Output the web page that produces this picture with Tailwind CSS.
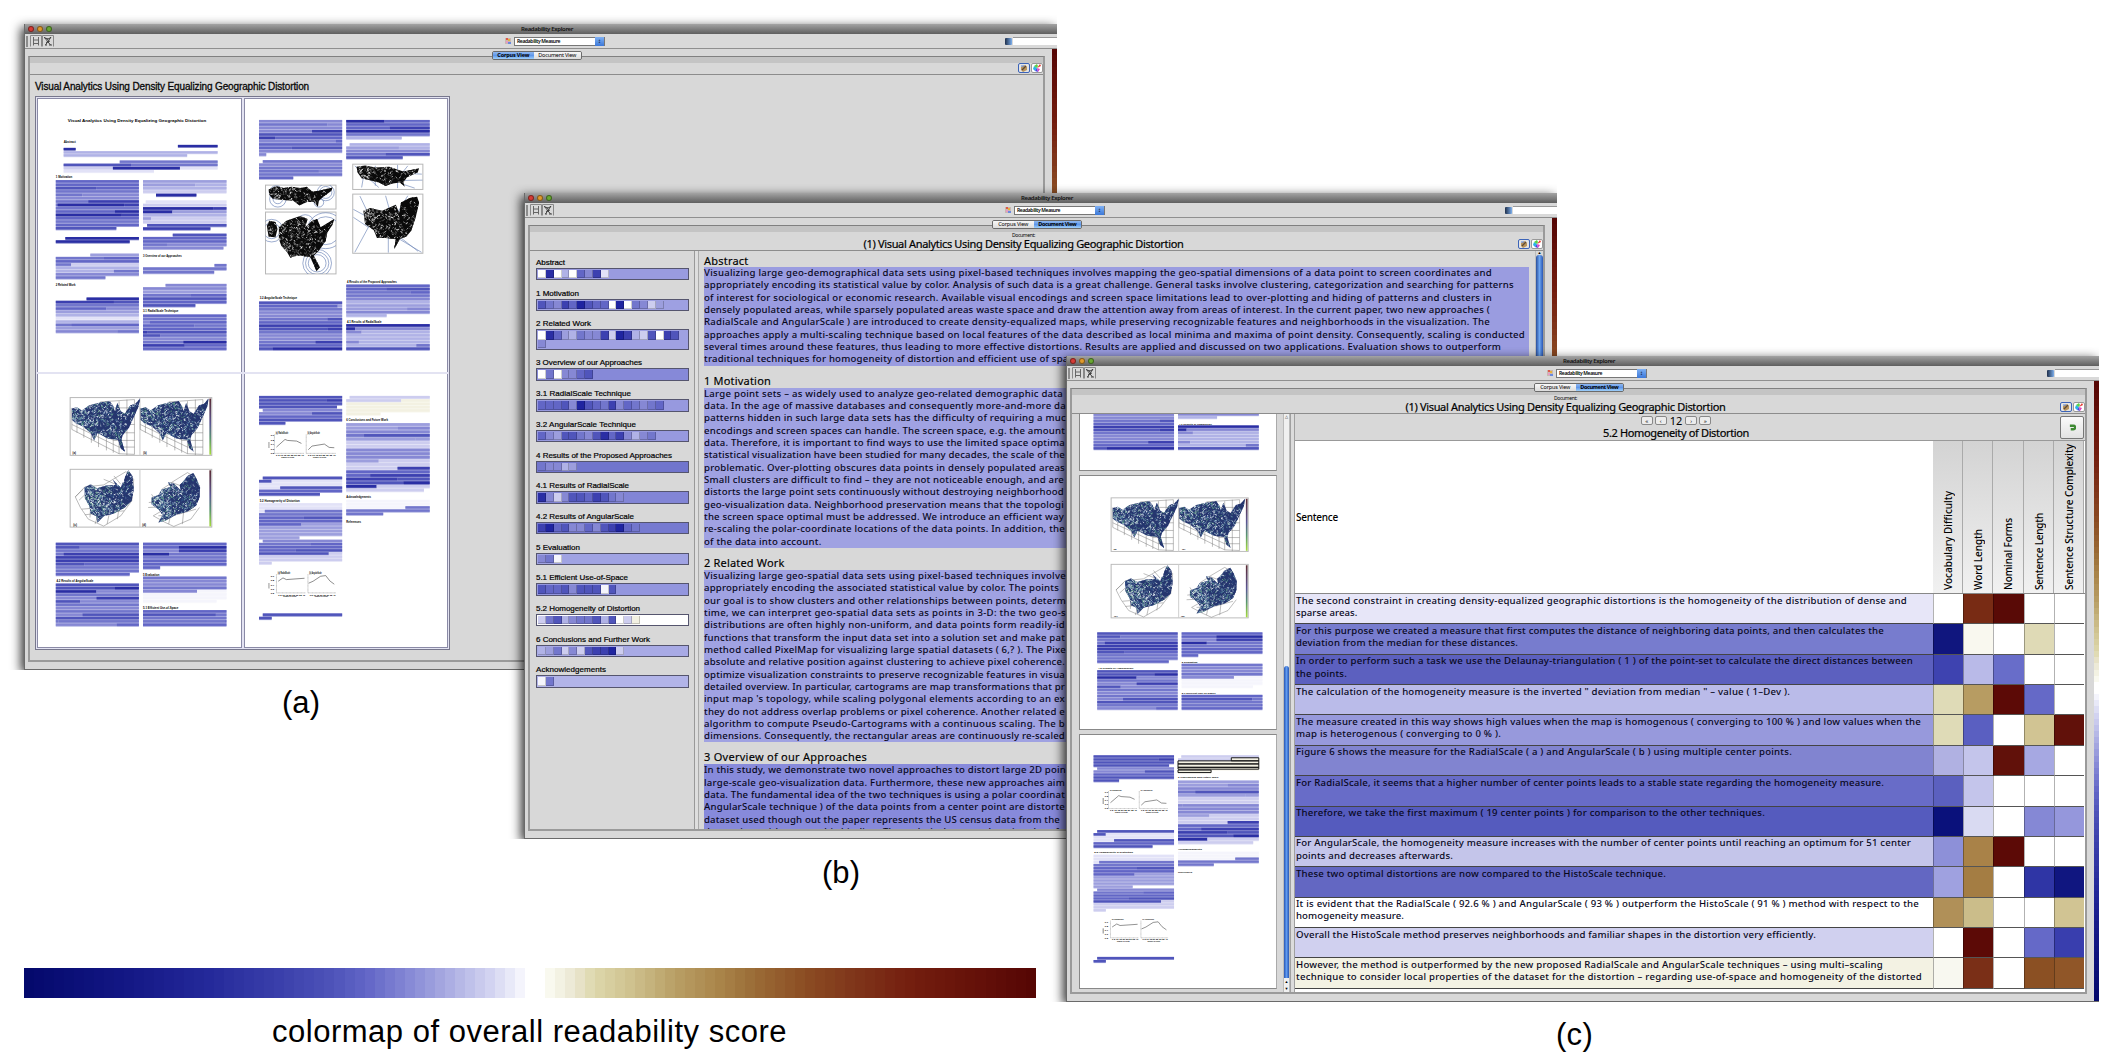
<!DOCTYPE html>
<html lang="en">
<head>
<meta charset="utf-8">
<title>Readability Explorer</title>
<script src="https://cdn.jsdelivr.net/npm/@tailwindcss/browser@4"></script>
</head>
<body class="bg-white">
<div class="relative w-[2110px] h-[1054px] overflow-hidden bg-white text-black" id="stage"></div>

<script>
const LG = "font-['Noto_Sans',sans-serif]";

/* ---------- readability colour map ---------- */
const stops = [[0,'04096c'],[.096,'131784'],[.176,'232899'],[.243,'383da9'],[.297,'4b50b7'],[.337,'6266c7'],[.384,'8a8dd7'],[.424,'b0b2e4'],[.464,'d6d7f2'],[.491,'f5f5fc'],[.496,'ffffff'],[.515,'ffffff'],[.519,'fafaf0'],[.544,'ebe7d2'],[.564,'ddd8ac'],[.604,'cdbf8c'],[.644,'b9a066'],[.685,'ab874c'],[.725,'9a6b36'],[.778,'8b4b22'],[.825,'7f351a'],[.878,'741f0f'],[.945,'651109'],[1,'560604']];
const rgb = h => [0,2,4].map(i => parseInt(h.slice(i,i+2),16));
function cmap(t){
  for(let i=1;i<stops.length;i++) if(t<=stops[i][0]){
    const [a,ca]=stops[i-1],[b,cb]=stops[i],k=(t-a)/(b-a),x=rgb(ca),y=rgb(cb);
    return 'rgb('+x.map((v,j)=>Math.round(v+(y[j]-v)*k)).join(',')+')';
  }
  return '#560604';
}
const scale = rev => Array.from({length:101},(_,i)=>`<div class="flex-1" style="background:${cmap(rev?1-i/100:i/100)}"></div>`).join('');

const pal = {d:'#1f24a0','0':'#2a2ea4','1':'#3c40b0','2':'#5055bb','3':'#6266c6','4':'#7276cc','5':'#8688d4','6':'#9c9edd','7':'#b0b2e6','8':'#cdcdef','9':'#e2e2f7',w:'#ffffff',f:'#f5f5fc',b:'#f3f1e2'};

/* ---------- page miniatures ---------- */
let seed = 7; const rnd = () => (seed = (seed*16807)%2147483647)/2147483647;
function block(x0,x1,y0,y1,rows){
  const r = rows.split('|'), p = (y1-y0)/r.length; let s='';
  r.forEach((row,i)=>{
    const t = row.trim().split(/\s+/);
    if(isNaN(+t[0]) || t[0].length<2) t.unshift(x0);
    if(t.length%2===0) t.push(x1);
    for(let k=0;k+2<t.length;k+=2){
      const w=t[k+2]-t[k], y=y0+i*p;
      s+=`<rect x="${t[k]}" y="${y.toFixed(1)}" width="${w}" height="${p.toFixed(1)}" fill="${pal[t[k+1]]}" opacity=".6"/><rect x="${t[k]}" y="${y.toFixed(1)}" width="${w}" height="${(p*.74).toFixed(1)}" fill="${pal[t[k+1]]}"/>`;
    }
  });
  return s;
}
const tt = (x,y,w,s,txt) => `<text x="${x}" y="${y}" font-size="${s}" textLength="${w}" lengthAdjust="spacingAndGlyphs" font-weight="700" font-family="Liberation Sans, sans-serif">${txt}</text>`;
let cid=0;
function cloud(pts,box,colors,n,len){
  const id='c'+(cid++), [a,b,c,d]=box; let s=`<clipPath id="${id}"><polygon points="${pts}"/></clipPath><polygon points="${pts}" fill="${colors[0]}"/><g clip-path="url(#${id})" fill="none">`;
  for(let i=0;i<n;i++){
    const x=a+(c-a)*rnd(), y=b+(d-b)*rnd(), f=(x-a)/(c-a), ci = rnd()<(1.1-f*.85)? 1+Math.floor(rnd()*(colors.length-1)) : 0;
    s+=`<path d="M${x.toFixed(0)} ${y.toFixed(0)}l${((rnd()-.5)*len).toFixed(1)} ${((rnd()-.5)*len).toFixed(1)}" stroke="${colors[ci]}" stroke-width="2.6"/>`;
  }
  return s+'</g>';
}
const frame=(x,y,X,Y,c='#b8b8b8')=>`<rect x="${x}" y="${y}" width="${X-x}" height="${Y-y}" fill="#fff" stroke="${c}" stroke-width="3"/>`;
const boxed=(x,y,X,Y,art)=>{const id='f'+(cid++);return frame(x,y,X,Y)+`<clipPath id="${id}"><rect x="${x}" y="${y}" width="${X-x}" height="${Y-y}"/></clipPath><g clip-path="url(#${id})">${art}</g>`};
const rings=(x,y,...r)=>r.map(q=>`<circle cx="${x}" cy="${y}" r="${q}" fill="none" stroke="#6d84b8" stroke-width="2"/>`).join('');
const ray=d=>`<path d="${d}" stroke="#7189b9" stroke-width="2" fill="none"/>`;
const bw=['#0a0a0a','#777','#f0f0f0','#444','#111','#c8c8c8'];
const bl=['#26366f','#5a8a9e','#bcd6d6','#31558a','#eaf2f3','#5f9f84','#7f9fc0','#dfe9ee'];

const P1 = tt(195,363,405,11,'Visual Analytics Using Density Equalizing Geographic Distortion')+tt(183,426,35,8,'Abstract')+
 block(183,633,432,441,'517 0 633')+block(183,633,441,450,'0 218')+block(183,633,451,469,'7|7 544')+
 block(183,633,479,517,'347 4 633|2 380 4|8 327 0 523 9|9 447')+tt(160,532,48,8,'1 Motivation')+
 block(160,403,538,689,'3|3|2 278 3|4|4 238 5|5|4 255 1|4 165 0 360 1|4|3 333 0|0 353 1|3|4|3|2 337')+
 block(160,403,709,729,'188 0 403|0 376')+
 block(160,403,759,837,'261 6 403|4 299 3|3|4 205 8|7|7 330 4|5|4 305')+tt(160,856,58,8,'2 Related Work')+
 block(160,403,891,999,'250 0 403|1 330 2|4|3 308 5|6|7|9|7|4 205 3|6|5 340 4')+
 block(415,659,538,589,'6|6 568 7|7|8|453 0 571')+
 block(415,659,599,690,'423 9 659|8|0 620 1|0 501 6|7|6 439 8|8|427 2 659|1 612')+
 block(415,659,699,748,'502 2 659|3|3|4 485 5|5 650')+tt(415,768,113,8,'3 Overview of our Approaches')+
 block(415,659,790,821,'624 4 659|4|4 623')+block(415,659,850,921,'481 5 659|5|6|4 555 3|2|3|2 568')+
 tt(415,936,103,8,'3.1 RadialScale Technique')+
 block(415,659,942,1051,'3|4|5 435 3|3 565 4|3|1 427 2|2 465 4|5|4 533 0|1 537 3|3');

const P2 = block(750,993,357,467,'5|4 950 5|5|5 905 1|2|1 797 3|5 975 3|3|3 845 2|5|5 771')+
 block(750,993,478,537,'761 4 993|5|4|4 925 5|4|3 850')+
 block(1005,1249,357,417,'0 1117 3|3|3 1132 1|0|4|7 1167')+block(1005,1249,427,476,'1015 7 1249|6 1159 7|5|4 1120 2|2 1170')+
 boxed(769,553,975,625,rings(805,595,14,24)+rings(800,575,20)+rings(945,575,18,25)+rings(925,605,14)+
 cloud('778,566 800,556 822,562 845,558 870,562 890,558 905,572 925,570 965,560 962,570 938,588 925,600 922,618 910,604 890,604 868,614 850,600 820,598 790,594 780,582',[778,556,965,618],bw,420,14))+
 boxed(769,634,975,820,rings(787,690,24,34)+rings(920,788,26,34,42)+rings(945,690,42,54)+rings(885,668,26)+
 cloud('773,675 780,660 798,664 804,685 798,710 778,708',[773,660,804,710],bw,60,12)+
 cloud('808,680 830,660 870,646 892,655 885,680 905,660 920,655 930,680 970,655 965,672 950,695 945,720 925,750 910,765 928,800 918,812 908,788 900,770 870,765 850,768 842,772 832,755 815,735 808,715',[806,646,970,812],bw,1100,14))+
 boxed(1024,490,1229,566,ray('M1030 495L1100 560M1050 560L1060 500M1090 555V495M1155 492V562M1110 540L1228 538M1120 515L1226 520M1170 550L1205 562M1185 495L1150 540')+
 cloud('1035,498 1060,494 1090,500 1130,498 1172,512 1218,502 1214,514 1182,530 1172,545 1176,558 1162,545 1140,548 1120,556 1100,545 1080,540 1050,532 1038,515',[1035,494,1218,558],bw,420,14))+
 boxed(1024,580,1229,758,ray('M1045 586L1070 640M1026 626L1060 645M1026 650L1070 680M1030 755L1080 660M1160 715L1225 755M1150 700L1215 752M1120 585L1135 640M1185 585L1140 660M1128 700V756')+
 cloud('1055,630 1075,622 1110,630 1150,612 1160,638 1165,605 1190,592 1212,588 1218,606 1208,650 1195,690 1180,708 1162,715 1145,746 1150,716 1120,712 1095,712 1085,688 1060,670',[1055,588,1218,746],bw,1000,14))+
 tt(1007,846,146,8,'4 Results of the Proposed Approaches')+block(1005,1249,852,951,'3|3 1122 2|4 1193 3|4|5|7|6|6 1183 5|5|7 1123')+
 tt(752,895,109,8,'3.2 AngularScale Technique')+block(750,993,903,1051,'2|3 980 6|4|5|5|4 950 2|3|1|2 950 1|4|5|5|4 915 1|3|2 790 0')+
 tt(1007,969,101,8,'4.1 Results of RadialScale')+block(1005,1249,971,1051,'0|0 1031 5|5 1050 7|7|7|5 1042 7|7 1210 4|2');

const mesh = (x)=>`<g stroke="#777" stroke-width="1.5" fill="none"><path d="M${x+207} 140V205M${x+222} 148V215M${x+242} 190V230M${x+264} 210V245M${x+285} 215V258M${x+308} 220V268M${x+328} 225V275M${x+345} 120V278M${x+368} 115V282M${x+390} 115V280M${x+207} 205L${x+345} 278L${x+390} 280M${x+207} 190L${x+345} 258H${x+390}M${x+207} 175L${x+330} 238H${x+390}M${x+290} 122L${x+390} 115M${x+320} 190H${x+390}M${x+340} 215H${x+390}M${x+330} 140H${x+390}M${x+340} 165H${x+390}"/></g>`;
const usa=x=>[[207,142],[222,138],[236,148],[258,132],[290,124],[318,120],[328,134],[332,150],[340,125],[350,150],[362,158],[378,132],[392,128],[406,112],[402,136],[388,168],[374,200],[356,222],[352,236],[362,272],[350,262],[342,236],[312,232],[282,216],[272,238],[262,216],[240,196],[218,186],[207,176]].map(p=>(p[0]+x)+','+p[1]).join(' ');
const strip=(y,Y)=>`<rect x="609" y="${y}" width="5" height="${Y-y}" fill="url(#dens)"/>`;
const P3 = `<defs><linearGradient id="dens" x1="0" y1="0" x2="0" y2="1"><stop offset="0" stop-color="#5b2b33"/><stop offset=".45" stop-color="#5a5694"/><stop offset=".7" stop-color="#57936f"/><stop offset="1" stop-color="#a6dc3c"/></linearGradient></defs>`+
 frame(202,109,616,283)+`<path d="M406 109V283" stroke="#ccc" stroke-width="3"/>`+mesh(0)+cloud(usa(0),[205,112,406,272],bl,1700,13)+mesh(200)+cloud(usa(201),[406,112,607,272],bl,1700,13)+strip(112,281)+tt(209,279,10,8,'(a)')+tt(416,279,10,8,'(b)')+
 frame(202,325,616,499)+`<path d="M406 325V499" stroke="#ccc" stroke-width="3"/>`+
 `<g stroke="#777" stroke-width="1.5" fill="none"><path d="M217 408L245 378L300 372L365 332L388 355L382 420L350 465L300 496L255 475L232 440ZM217 408L240 385M228 418L262 385M300 355L340 372M330 345L350 370M236 445L290 440L382 420M245 462L300 455L360 450M275 490L290 440M310 490L320 440M340 475L345 440M265 375L260 470M430 440L470 438M432 425L475 420M440 400L470 450L445 465L480 485L505 497L555 475L580 440M490 370L545 335L570 350M470 385L500 365L540 380M460 465L520 460L570 445M490 490L500 440M530 490L535 440"/></g>`+
 cloud('244,380 262,370 280,382 308,374 335,372 326,356 350,380 356,364 358,368 362,350 372,328 384,345 388,385 382,420 362,440 330,458 300,466 282,486 278,466 262,458 258,435 245,412',[244,328,388,486],bl,1500,13)+
 cloud('440,410 460,402 470,386 495,378 488,364 505,368 525,388 522,372 530,365 545,345 562,336 572,355 582,380 580,410 570,435 545,452 515,460 480,480 460,485 472,462 460,445 440,430',[440,336,582,485],bl,1500,13)+strip(328,497)+tt(211,496,11,8,'(c)')+tt(413,496,11,8,'(d)')+
 block(160,403,546,647,'2|2 230 4|4|4 183 1|1|1|2 243 3|4|4|3 376')+tt(162,665,108,8,'4.2 Results of AngularScale')+
 block(160,403,669,799,'2|2 333 0|0 279 5|4|5 279 1|2 231 5|4|5|4|5 238 2|2|4 168 4|5 338 3')+
 block(415,659,546,627,'3|3 520 0|5 520 1|0 491 4|4|3|3|3 465')+tt(415,646,48,8,'5 Evaluation')+
 block(415,659,648,728,'4|5|5|4|5 573 f|f|f|f 630')+tt(415,745,103,8,'5.1 Efficient Use-of-Space')+block(415,659,749,799,'3|2 628 4|4|4 655 3|3');

const chart=(x,y,X,Y,line,t)=>`<path d="M${x} ${y}V${Y}H${X}" stroke="#888" stroke-width="1.5" fill="none" stroke-dasharray="3 1"/><path d="M${line}" stroke="#444" stroke-width="1.8" fill="none"/>`+tt(x+4,y-1,36,8,t)+tt(x+20,Y+13,38,6,'Number of Points')+tt(x+5,Y+8,X-x-6,5,'0 5 10 15 20 25 30 35 40');
const yax=(x,y,Y)=>{let s='';for(let i=0;i<5;i++)s+=tt(x,y+4+(Y-y)*i/4,10,6,'0.'+(9-i));return s+`<path d="M${x-5} ${y+22}V${Y-14}" stroke="#333" stroke-width="3" stroke-dasharray="2 1"/>`};
const P4 = block(750,993,104,192,'2|2 947 1|2|2 978|761 5 993|5 905 2|3|2|2 827')+
 yax(784,222,276)+chart(795,220,882,277,'801 258L826 235L833 238L860 240L874 247','(a) RadialScale')+chart(888,220,975,277,'894 266L905 255L941 249L955 259L970 260','(b) AngularScale')+
 block(750,993,347,406,'761 2 993|2 787 9|9|9 812 2|3|2 928')+tt(752,423,117,8,'5.2 Homogeneity of Distortion')+
 block(750,993,427,537,'9|9|9 767 4|4|3 881 2|3|3 874 6|6|6|6|6 868')+block(750,993,537,613,'761 5 993|4 900 3|3|3 857 2|2 954 8|8|8|8 787')+
 yax(784,645,697)+chart(801,641,886,697,'806 662L820 652L830 657L883 653','(a) RadialScale')+chart(893,641,975,697,'895 668L908 662L930 647L945 645L957 661L970 671','(b) AngularScale')+
 block(750,993,759,779,'761 2 993|2 787')+
 block(1005,1249,104,164,'1015 8 1249|8 1166 b|b|b|b|b 1105')+tt(1005,179,122,8,'6 Conclusions and Future Work')+
 block(1005,1249,186,394,'6|6 1156 5|5|4 1057 2|6 1208 6|8|8|5 1019 5|5|5|6 1100 8|8|8 1155 1|3|3 1075 1|1 1155 2|2 1172 0|0 1094 8|8 1232')+
 tt(1005,411,72,8,'Acknowledgements')+block(1005,1249,417,465,'f|f|f 1178 4|4|4 1113')+tt(1005,487,43,8,'References');
const pageBox=['108 294 592 821','709 294 592 821','108 38 592 822','709 38 592 822'], pageArt=[P1,P2,P3,P4];
const page=(n,extra='')=>`<svg class="block w-full h-full" viewBox="${pageBox[n]}" preserveAspectRatio="none">${pageArt[n]}${extra}</svg>`;

/* ---------- window chrome ---------- */
const fit=(w,txt,cls='')=>`<span class="inline-block whitespace-nowrap ${cls}" data-w="${w}">${txt}</span>`;
const light=c=>`<span class="block size-[6px] rounded-full border border-black/40 ${c}"></span>`;
const swatch=`<svg class="block w-[6px] h-[6px]" viewBox="0 0 6 6"><rect width="6" height="6" fill="#c9b8b0"/><rect x="1" y="0" width="2" height="2" fill="#dd5a4a"/><rect x="3" y="1" width="2" height="2" fill="#e8b23c"/><rect x="1" y="3" width="2" height="2" fill="#e79ac4"/><rect x="3" y="4" width="3" height="2" fill="#6a8ae0"/></svg>`;
function win(o){
  const tab=(t,w,on)=>`<div class="flex h-full items-center justify-center ${on?'bg-linear-to-b from-[#8fb8f0] via-[#5f97ea] to-[#9fd0fa] font-bold':'bg-linear-to-b from-[#f8f8f8] to-[#dcdcdc]'} ${w}">${fit(on?(t[0]=='C'?32:38):(t[0]=='C'?30:38),t)}</div>`;
  return `<section class="absolute ${o.pos} w-[1033px] h-[646px] ${LG} shadow-[-3px_3px_10px_rgba(0,0,0,0.8)] [clip-path:inset(-9px_0_0_-16px)]">
  <div class="relative flex h-full flex-col bg-[#d8d8d8] border-l border-[#6a6a6a] border-b">
    <header class="relative flex h-[10px] shrink-0 items-center gap-[3px] bg-linear-to-b from-[#a4a4a4] to-[#5f5f5f] pl-[3px]">
      ${light('bg-[#d63b35]')}${light('bg-[#e09a2c]')}${light('bg-[#6aa832]')}
      <span class="ml-[466px] text-[6px] leading-none text-[#111] font-semibold">${fit(52,'Readability Explorer')}</span>
    </header>
    <div class="flex h-[15px] shrink-0 items-center border-b border-[#8f8f8f] bg-[#d9d9d9] text-[5px] leading-none">
      <span class="ml-px h-[11px] w-[2px] bg-[#8c8c8c]"></span>
      <svg class="ml-[2px] h-[12px] w-[24px]" viewBox="0 0 24 12"><path d="M.5 11.5V.5H11.5V11.5M12.5 11.5V.5H23.5V11.5" fill="none" stroke="#888"/><path d="M3.5 2v8.500M8.500 2v8.500M3.500 5h5M3.500 8.500h5" stroke="#666" fill="none"/><path d="M14.500 2.500L20.500 10M21 2L15.500 10M14 2.500l4 1.500M17 4.500l4-2M16 7.500l4-1.500M15 10h2M19 10h3" stroke="#333" stroke-width=".9" fill="none"/></svg>
      <span class="ml-[451px]">${swatch}</span>
      <div class="ml-[3px] flex h-[9px] w-[91px] items-center justify-between border border-[#777] bg-white pl-[2px] font-semibold">${fit(43,'Readability Measure')}<span class="flex h-[9px] w-[9px] items-center justify-center bg-linear-to-b from-[#7fb0f3] to-[#3c78d8] text-[6px]">↕</span></div>
      <span class="ml-auto flex h-[7px] w-[7px] rounded-[1px] bg-linear-to-r from-[#20304c] to-[#7db0ee]"></span>
      <span class="ml-px h-[8px] w-[44px] border-t border-[#999] bg-white"></span>
    </div>
    <div class="flex min-h-0 flex-1">
      <div class="relative ml-[3px] mt-[7px] mb-[7px] mr-[7px] flex min-w-0 flex-1 flex-col border-2 border-[#9a9a9a] border-t-[#808080] border-t">
        <div class="absolute -top-[6px] left-[462px] flex h-[9px] w-[90px] overflow-hidden rounded-[2px] border border-[#6b6b6b] text-[5.5px] leading-none">${tab('Corpus View','w-[41px]',o.corpus)}${tab('Document View','w-[48px]',!o.corpus)}</div>
        <div class="h-[6px] shrink-0 bg-[#c4c4c4]"></div>
        <div class="relative flex ${o.head} shrink-0 flex-col items-center border-b border-[#8c8c8c] pr-[26px]">
          ${o.corpus?'':`<div class="text-[5px] leading-[6px]">${fit(23,'Document:')}</div><div class="text-[11px] leading-[11px] [-webkit-text-stroke:0.2px_black]">${fit(320,'(1) Visual Analytics Using Density Equalizing Geographic Distortion')}</div>`}
          <div class="absolute bottom-px right-0 flex gap-[1px]">
            <span class="flex h-[10px] w-[12px] items-center justify-center rounded-[2px] border border-[#3c64b8] bg-[#e4e4e4]"><svg class="size-[8px]" viewBox="0 0 8 8"><path d="M1 3l4-2 2 2v3L3 8 1 6z" fill="#b9935a"/><path d="M2 6l4-4" stroke="#5a4a3a" stroke-width="1.2"/><path d="M1 2h3" stroke="#5b86d8"/></svg></span>
            <span class="flex h-[10px] w-[12px] items-center justify-center rounded-[2px] border border-[#999] bg-white"><svg class="size-[8px]" viewBox="0 0 8 8"><path d="M4 4L1 2 0 5 2 7z" fill="#28b4e8"/><path d="M4 4L2 7l3 1z" fill="#4444e0"/><path d="M4 4l1 4 2-3z" fill="#e040c0"/><path d="M4 4l4-2-1-2z" fill="#e83a30"/><path d="M4 4L1 2l3-2 1 2z" fill="#5ad048"/></svg></span>
          </div>
        </div>
        ${o.body}
      </div>
      <div class="flex w-[5px] flex-col">${scale(true)}</div>
    </div>
  </div></section>`;
}

/* ---------- (a) corpus view ---------- */
const bodyA=`<div class="flex flex-1 flex-col pl-[5px] pt-[4px] font-['Liberation_Sans',Arial,sans-serif]">
  <h1 class="text-[10px] leading-[15px] font-medium text-[#111] [-webkit-text-stroke:0.3px_black]">${fit(274,'Visual Analytics Using Density Equalizing Geographic Distortion')}</h1>
  <div class="mt-[2px] grid h-[554px] w-[415px] grid-cols-2 grid-rows-2 border border-[#77778c] bg-[#e3e3f2] p-px gap-x-[2px] gap-y-[2px]">
    ${[0,1,2,3].map(n=>`<div class="min-h-0 border-x border-[#8a8aa6] bg-white ${n<2?'border-t':'border-b'}">${page(n)}</div>`).join('')}
  </div></div>`;

/* ---------- (b) document view ---------- */
const toc=[['Abstract',29,'w0w7w3519','#999be0'],['1 Motivation',43,'24513d233wdw4586','#9ea0e2'],['2 Related Work',55,'w036745518d1782w125','#9fa1e2'],['3 Overview of our Approaches',106,'w4w5532','#8689d8'],['3.1 RadialScale Technique',95,'33325d2341534543','#9799df'],['3.2 AngularScale Technique',100,'356224520315754','#9799df'],['4 Results of the Proposed Approaches',136,'45576','#7175cd'],['4.1 Results of RadialScale',93,'05852231245','#8285d6'],['4.2 Results of AngularScale',98,'1d32553521d34','#767ad0'],['5 Evaluation',44,'54f','#a0a3e3'],['5.1 Efficient Use-of-Space',92,'23325222f2','#9396de'],['5.2 Homogeneity of Distortion',104,'8427544272w8b','#ffffff'],['6 Conclusions and Further Work',114,'764858211d8','#a8aae5'],['Acknowledgements',70,'f4','#b2b4e8']];
const secs=[['Abstract',44.5,'bg-[#9a9ce0]',[[788,'Visualizing large geo-demographical data sets using pixel-based techniques involves mapping the geo-spatial dimensions of a data point to screen coordinates and'],[810,'appropriately encoding its statistical value by color. Analysis of such data is a great challenge. General tasks involve clustering, categorization and searching for patterns'],[788,'of interest for sociological or economic research. Available visual encodings and screen space limitations lead to over-plotting and hiding of patterns and clusters in'],[786,'densely populated areas, while sparsely populated areas waste space and draw the attention away from areas of interest. In the current paper, two new approaches ('],[786,'RadialScale and AngularScale ) are introduced to create density-equalized maps, while preserving recognizable features and neighborhoods in the visualization. The'],[821,'approaches apply a multi-scaling technique based on local features of the data described as local minima and maxima of point density. Consequently, scaling is conducted'],[797,'several times around these features, thus leading to more effective distortions. Results are applied and discussed on two applications. Evaluation shows to outperform'],[378,'traditional techniques for homogeneity of distortion and efficient use of space.']]],
['1 Motivation',67,'bg-[#a0a2e2]',[[359,'Large point sets – as widely used to analyze geo-related demographic data'],[362,'data. In the age of massive databases and consequently more-and-more da'],[362,'patterns hidden in such large data sets has the difficulty of requiring a muc'],[361,'encodings and screen spaces can handle. The screen space, e.g. the amount'],[361,'data. Therefore, it is important to find ways to use the limited space optima'],[361,'statistical visualization have been studied for many decades, the scale of the'],[361,'problematic. Over-plotting obscures data points in densely populated areas'],[360,'Small clusters are difficult to find – they are not noticeable enough, and are'],[360,'distorts the large point sets continuously without destroying neighborhood'],[360,'geo-visualization data. Neighborhood preservation means that the topologi'],[360,'the screen space optimal must be addressed. We introduce an efficient way'],[361,'re-scaling the polar-coordinate locations of the data points. In addition, the'],[117.5,'of the data into account.']]],
['2 Related Work',80.5,'bg-[#a0a2e2]',[[362,'Visualizing large geo-spatial data sets using pixel-based techniques involve'],[355,'appropriately encoding the associated statistical value by color. The points'],[362,'our goal is to show clusters and other relationships between points, determ'],[362,'time, we can interpret geo-spatial data sets as points in 3-D: the two geo-s'],[361,'distributions are often highly non-uniform, and data points form readily-id'],[361,'functions that transform the input data set into a solution set and make pat'],[362,'method called PixelMap for visualizing large spatial datasets ( 6,? ). The Pixe'],[361,'absolute and relative position against clustering to achieve pixel coherence.'],[361,'optimize visualization constraints to preserve recognizable features in visua'],[361,'detailed overview. In particular, cartograms are map transformations that pr'],[361,"input map 's topology, while scaling polygonal elements according to an ex"],[361,'they do not address overlap problems or pixel coherence. Another related e'],[361,'algorithm to compute Pseudo-Cartograms with a continuous scaling. The b'],[361,'dimensions. Consequently, the rectangular areas are continuously re-scaled']]],
['3 Overview of our Approaches',163,'bg-[#878adb]',[[362,'In this study, we demonstrate two novel approaches to distort large 2D poin'],[361,'large-scale geo-visualization data. Furthermore, these new approaches aim'],[361,'data. The fundamental idea of the two techniques is using a polar coordinat'],[361,'AngularScale technique ) of the data points from a center point are distorte'],[356,'dataset used though out the paper represents the US census data from the'],[361,'data points with geographic binding. The technical country location therefo']]]];
const bodyB=`<div class="flex min-h-0 flex-1">
  <nav class="flex w-[165px] shrink-0 flex-col border-r border-[#999] pl-[6px] pt-[6px] font-['Liberation_Sans',Arial,sans-serif] text-[8px]">
  ${toc.map(t=>`<div class="mb-[7.3px]"><div class="h-[11px] leading-[11px] font-medium [-webkit-text-stroke:0.2px_black]">${fit(t[1],t[0])}</div><div class="flex w-[153px] flex-wrap border border-[#55556e] p-px" style="background:${t[3]}">${[...t[2]].map(c=>`<span class="block h-[8.4px] w-[7.85px] border-b border-r border-black/20" style="background:${pal[c]}"></span>`).join('')}</div></div>`).join('')}
  </nav>
  <div class="w-[4px] border-r border-[#aaa] bg-[#dedede]"></div>
  <main class="min-w-0 flex-1 overflow-hidden pl-[5px]">
  ${secs.map((s,i)=>`<h2 class="${i?'h-[22px] pt-[8px]':'h-[16px] pt-[3px]'} text-[11px] leading-[14px] font-normal [-webkit-text-stroke:0.15px_black]">${fit(s[1],s[0])}</h2><div class="w-[825px] ${s[2]} text-[9.6px] font-medium leading-[12.33px] text-[#08081c]">${s[3].map(l=>`<div class="h-[12.33px]">${fit(l[0],l[1])}</div>`).join('')}</div>`).join('')}
  </main>
  <div class="flex w-[8px] flex-col border-l border-[#bbb]"><span class="h-[4px] text-center text-[4px] leading-[4px]">▲</span><span class="flex-1 rounded-t-[3px] bg-linear-to-r from-[#2b4f9c] via-[#6da6f2] to-[#2b57b4]"></span></div>
</div>`;

/* ---------- (c) sentence table ---------- */
const rows=[['#e7e6f8',['w','#782b14','#590a06','w','w'],[611,'The second constraint in creating density-equalized geographic distortions is the homogeneity of the distribution of dense and'],[61.5,'sparse areas.']],
['#777cce',['#10167e','#f9f8ef','w','#dfdab6','w'],[588,'For this purpose we created a measure that first computes the distance of neighboring data points, and then calculates the'],[222,'deviation from the median for these distances.']],
['#5c60bf',['#3e43b0','#b9bae8','#686dc9','w','w'],[617,'In order to perform such a task we use the Delaunay-triangulation ( 1 ) of the point-set to calculate the direct distances between'],[51,'the points.']],
['#babbe9',['#dfdbb7','#b79c62','#5c0a06','#6569c7','w'],[494,'The calculation of the homogeneity measure is the inverted " deviation from median " – value ( 1–Dev ).']],
['#9799dc',['#dfdbb7','#5a5fc1','w','#d1c493','#61110a'],[625,'The measure created in this way shows high values when the map is homogenous ( converging to 100 % ) and low values when the'],[205,'map is heterogenous ( converging to 0 % ).']],
['#8184d0',['#b0b1e2','#c4c5eb','#61110a','#a6a8e2','w'],[496,'Figure 6 shows the measure for the RadialScale ( a ) and AngularScale ( b ) using multiple center points.']],
['#686cc8',['#5b60bf','#c4c5eb','w','w','w'],[588,'For RadialScale, it seems that a higher number of center points leads to a stable state regarding the homogeneity measure.']],
['#555bbe',['#0a117b','#d9daf2','w','#8588d5','#9597dc'],[469,'Therefore, we take the first maximum ( 19 center points ) for comparison to the other techniques.']],
['#c4c5ea',['#8d90d8','#a98248','#5c0a06','w','w'],[615,'For AngularScale, the homogeneity measure increases with the number of center points until reaching an optimum for 51 center'],[157,'points and decreases afterwards.']],
['#6367c2',['#9fa1e0','#a47d43','w','#2f35a5','#101680'],[370,'These two optimal distortions are now compared to the HistoScale technique.']],
['#ffffff',['#b09058','#cbbd8a','w','w','#d1c493'],[623,'It is evident that the RadialScale ( 92.6 % ) and AngularScale ( 93 % ) outperform the HistoScale ( 91 % ) method with respect to the'],[108,'homogeneity measure.']],
['#d0d0ef',['w','#5c0a06','w','#6569c8','#393eae'],[520,'Overall the HistoScale method preserves neighborhoods and familiar shapes in the distortion very efficiently.']],
['#f3f2e3',['#f8f8f0','#7a2f17','w','#8b5023','#905628'],[587,'However, the method is outperformed by the new proposed RadialScale and AngularScale techniques – using multi–scaling'],[626,'technique to consider local properties of the dataset for the distortion – regarding use-of-space and homogeneity of the distorted'],[20,'map.']]];
const heads=[['Vocabulary Difficulty',99],['Word Length',61],['Nominal Forms',72],['Sentence Length',77],['Sentence Structure Complexity',146]];
const nb=t=>`<span class="flex h-[9px] w-[12px] items-center justify-center rounded-[2px] border border-[#888] bg-[#ececec] text-[6px] leading-none">${t}</span>`;
const hl=`<g fill="none" stroke="#111" stroke-width="3"><path d="M1166 112H1249V122H1166ZM1005 122H1249V132H1005ZM1005 132H1249V143H1005ZM1005 143H1249V149H1005ZM1005 152H1105V160H1005Z"/></g>`;
const card='w-[198px] shrink-0 overflow-hidden border border-[#888] border-r-[#aaa] bg-white';
const bodyC=`<div class="flex min-h-0 flex-1">
  <aside class="flex w-[211px] shrink-0 flex-col overflow-hidden pl-[7px]">
    <div class="${card} relative h-[57px] border-t-0 flex flex-col justify-end"><div class="h-[254px] w-full shrink-0">${page(1)}</div></div>
    <div class="${card} mt-[4px] h-[255px]">${page(2)}</div>
    <div class="${card} mt-[4px] h-[255px]">${page(3,hl)}</div>
  </aside>
  <div class="flex w-[7px] flex-col items-center border-x border-[#bbb] bg-[#f0f0f0]"><span class="h-[252px] text-[4px] leading-[5px]">△</span><span class="w-[5px] flex-1 rounded-t-[3px] bg-linear-to-r from-[#2b57b4] via-[#5f9af0] to-[#2b57b4]"></span><span class="text-[4px] leading-[7px]">▲</span><span class="text-[4px] leading-[7px]">▼</span></div>
  <div class="w-[5px] border-x border-[#a0a0a0] bg-[#dcdcdc]"></div>
  <div class="flex min-w-0 flex-1 flex-col bg-white">
    <div class="flex h-[27px] shrink-0 border-b border-[#999] bg-[#d8d8d8] text-[11px]">
      <div class="flex flex-1 flex-col items-center pt-px pr-[3px]">
        <div class="flex h-[11px] items-center gap-[2px] leading-none">${nb('«')}${nb('‹')}<span class="mx-px">12</span>${nb('›')}${nb('»')}</div>
        <div class="leading-[14px] [-webkit-text-stroke:0.2px_black]">${fit(146,'5.2 Homogeneity of Distortion')}</div>
      </div>
      <div class="mr-px mt-[2px] flex h-[23px] w-[24px] items-center justify-center rounded-[2px] border border-[#777] bg-linear-to-b from-[#fafafa] to-[#e2e2e2]"><svg class="size-[7px]" viewBox="0 0 8 8"><path d="M1 2h4q2 0 2 2t-2 2H2" fill="none" stroke="#3e8a34" stroke-width="2.6"/></svg></div>
    </div>
    <div class="grid h-[153px] shrink-0 grid-cols-[638px_30px_30px_31px_30px_30px] grid-rows-[152px] border-b border-[#888]">
      <div class="flex items-center pl-px text-[10px]">${fit(42,'Sentence','font-medium')}</div>
      ${heads.map(h=>`<div class="flex items-end justify-center border-r border-[#aaa] bg-linear-to-b from-[#d3d3d3] to-[#f1f1f1] pb-[3px] text-[10px] leading-[14px] font-medium"><span class="whitespace-nowrap [writing-mode:vertical-rl] rotate-180" data-h="${h[1]}">${h[0]}</span></div>`).join('')}
    </div>
    ${rows.map(r=>`<div class="grid h-[30.36px] shrink-0 grid-cols-[638px_30px_30px_31px_30px_30px]">
      <div class="overflow-hidden border-b border-[#444] pl-px pt-[0.6px] text-[9.6px] font-medium leading-[12.3px] text-[#08081c]" style="background:${r[0]}">${r.slice(2).map(l=>`<div class="h-[12.3px]">${fit(l[0],l[1])}</div>`).join('')}</div>
      ${r[1].map(c=>`<div class="border-b border-l border-[#555] border-l-black/30" style="background:${c=='w'?'#fff':c}"></div>`).join('')}</div>`).join('')}
  </div>
</div>`;

const cap="font-['Liberation_Sans',Arial,sans-serif] whitespace-nowrap leading-none absolute";
document.getElementById('stage').innerHTML =
 win({pos:'left-[24px] top-[24px]',corpus:true,head:'h-[12px]',body:bodyA})+
 win({pos:'left-[524px] top-[193px]',head:'h-[19px]',body:bodyB})+
 win({pos:'left-[1066px] top-[356px]',head:'h-[19px]',body:bodyC})+
 `<div class="${cap} left-[282px] top-[687px] text-[31px]">${fit(38,'(a)')}</div>
  <div class="${cap} left-[822px] top-[857px] text-[31px]">${fit(38,'(b)')}</div>
  <div class="${cap} left-[1556px] top-[1019px] text-[31px]">${fit(37,'(c)')}</div>
  <div class="absolute left-[24px] top-[968px] flex h-[30px] w-[1012px]">${scale(false)}</div>
  <div class="${cap} left-[272px] top-[1016px] text-[31px]">${fit(515,'colormap of overall readability score')}</div>`;

/* spread each line to its set length, once styles and fonts are in force */
function spread(){
  const all=[...document.querySelectorAll('[data-w],[data-h]')];
  all.forEach(e=>e.style.letterSpacing='0px');
  const m=all.map(e=>{const b=e.getBoundingClientRect();return e.dataset.w?e.dataset.w-b.width:e.dataset.h-b.height});
  all.forEach((e,i)=>e.style.letterSpacing=(m[i]/e.textContent.length).toFixed(4)+'px');
}
spread();
addEventListener('load',()=>{spread();document.fonts.ready.then(spread);requestAnimationFrame(spread);setTimeout(spread,60);});
</script>
</body>
</html>
